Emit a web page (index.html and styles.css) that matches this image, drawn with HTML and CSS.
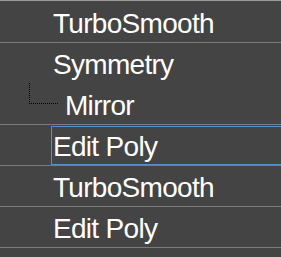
FILE: index.html
```html
<!DOCTYPE html>
<html lang="en">
<head>
<meta charset="UTF-8" />
<title>Modifier Stack</title>
<link rel="stylesheet" href="styles.css">
</head>
<body>
<ul class="stack">
  <li class="row"><span class="label">TurboSmooth</span></li>
  <li class="row no-line"><span class="label">Symmetry</span></li>
  <li class="row child"><span class="tree"></span><span class="label">Mirror</span></li>
  <li class="row"><span class="label selected">Edit Poly</span></li>
  <li class="row"><span class="label">TurboSmooth</span></li>
  <li class="row"><span class="label">Edit Poly</span></li>
</ul>
</body>
</html>
```

FILE: styles.css
```css
html,body{margin:0;padding:0;background:#444444;}
body{font-family:"Liberation Sans",Arial,sans-serif;color:#ffffff;overflow:hidden;}

/* modifier list ------------------------------------------- */
.stack{
  list-style:none;margin:0;padding:1px 0 0;
  border-top:1px solid #9a9a9a;
}
.row{
  display:flex;align-items:flex-start;
  height:41px;box-sizing:border-box;
  border-bottom:1px solid #7c7c7c;
}
.row.no-line{border-bottom-color:transparent;}

.label{
  display:block;flex:1;
  margin:1px -4px 0 51px;
  height:39px;box-sizing:border-box;
  border:1px solid transparent;
  padding:1px 0 0 1px;
  font-size:28px;line-height:37px;letter-spacing:-0.7px;
  white-space:nowrap;
}
.label.selected{border-color:#5a8bd0;}

/* tree connector ------------------------------------------ */
.tree{
  flex:none;width:28px;height:20px;
  margin:-1px 0 0 29px;
  border-left:1px dotted #000;
  border-bottom:1px dotted #000;
}
.row.child .label{margin-left:5px;}
```
